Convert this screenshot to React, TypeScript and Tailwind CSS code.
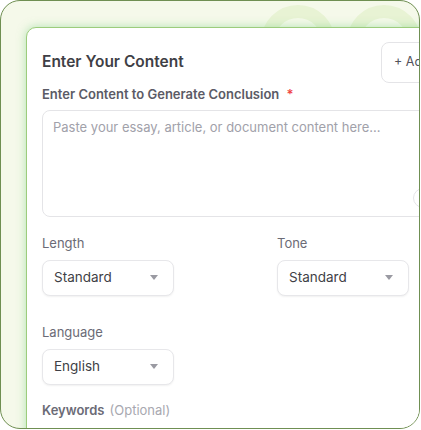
import React from 'react'

const font = { fontFamily: 'Inter, "Open Sans", sans-serif' }

function Caret() {
  return (
    <svg width="8" height="5" viewBox="0 0 8 5" className="shrink-0">
      <path d="M0 0 L8 0 L4 5 Z" fill="#9a9aa2" />
    </svg>
  )
}

function Select({ value }: { value: string }) {
  return (
    <div className="flex h-[36px] w-[132px] items-center justify-between rounded-lg border border-[#e7e7ea] bg-white pl-[11px] pr-[15px] shadow-[0_1px_2px_rgba(0,0,0,0.06)]">
      <span className="text-[13.5px] text-[#3f3f46]">{value}</span>
      <Caret />
    </div>
  )
}

export default function App() {
  return (
    <div className="h-[430px] w-[421px] bg-white" style={font}>
      <div className="relative h-[429px] w-[420px] overflow-hidden rounded-[20px] border-[1.5px] border-[#6f8f52] bg-[#f5f9ea]">
        {/* decorative rings */}
        <div className="absolute left-[260px] top-[4px] h-[74px] w-[74px] rounded-full border-[13px] border-[#e8f3d4]" />
        <div className="absolute left-[346px] top-[4px] h-[74px] w-[74px] rounded-full border-[13px] border-[#e8f3d4]" />

        {/* content card */}
        <div className="relative ml-[25px] mt-[25.5px] w-[520px] rounded-tl-[10px] border border-[#9ccc7c] bg-white px-[15px] pt-[14px] pb-6 shadow-[0_0_10px_rgba(110,205,120,0.5)]">
          <div className="flex h-[41px] items-center justify-between">
            <h2 className="text-[15.5px] font-semibold leading-[20px] text-[#3f3f46]">Enter Your Content</h2>
            <div className="mr-[49px] flex h-[41px] w-[100px] items-center rounded-lg border border-[#e4e4e7] pl-[12px] text-[12.5px] text-[#52525b]">
              + Add
            </div>
          </div>

          <div className="mt-[2px] text-[13px] font-semibold leading-[18px] text-[#5b5b66]">
            Enter Content to Generate Conclusion <span className="ml-1 text-[#ef4444]">*</span>
          </div>

          <div className="relative mt-[7px] h-[107px] w-[460px] rounded-lg border border-[#e4e4e7] px-[10px] pt-[7px]">
            <p className="text-[13px] leading-[18px] text-[#a1a1aa]">
              Paste your essay, article, or document content here...
            </p>
            <div className="absolute left-[370px] top-[77px] h-[20px] w-[20px] rounded-full border border-[#e4e4e7]" />
          </div>

          <div className="mt-[17px] grid w-[454px] grid-cols-2 gap-x-4">
            <div>
              <div className="text-[13px] leading-[18px] text-[#6b6b76]">Length</div>
              <div className="mt-[8px]">
                <Select value="Standard" />
              </div>
            </div>
            <div>
              <div className="text-[13px] leading-[18px] text-[#6b6b76]">Tone</div>
              <div className="mt-[8px]">
                <Select value="Standard" />
              </div>
            </div>
          </div>

          <div className="mt-[27px]">
            <div className="text-[13px] leading-[18px] text-[#6b6b76]">Language</div>
            <div className="mt-[8px]">
              <Select value="English" />
            </div>
          </div>

          <div className="mt-[16px] text-[13px] leading-[18px]">
            <span className="font-semibold text-[#6b6b76]">Keywords</span>
            <span className="ml-[5px] text-[#a8a8b0]">(Optional)</span>
          </div>
        </div>
      </div>
    </div>
  )
}
